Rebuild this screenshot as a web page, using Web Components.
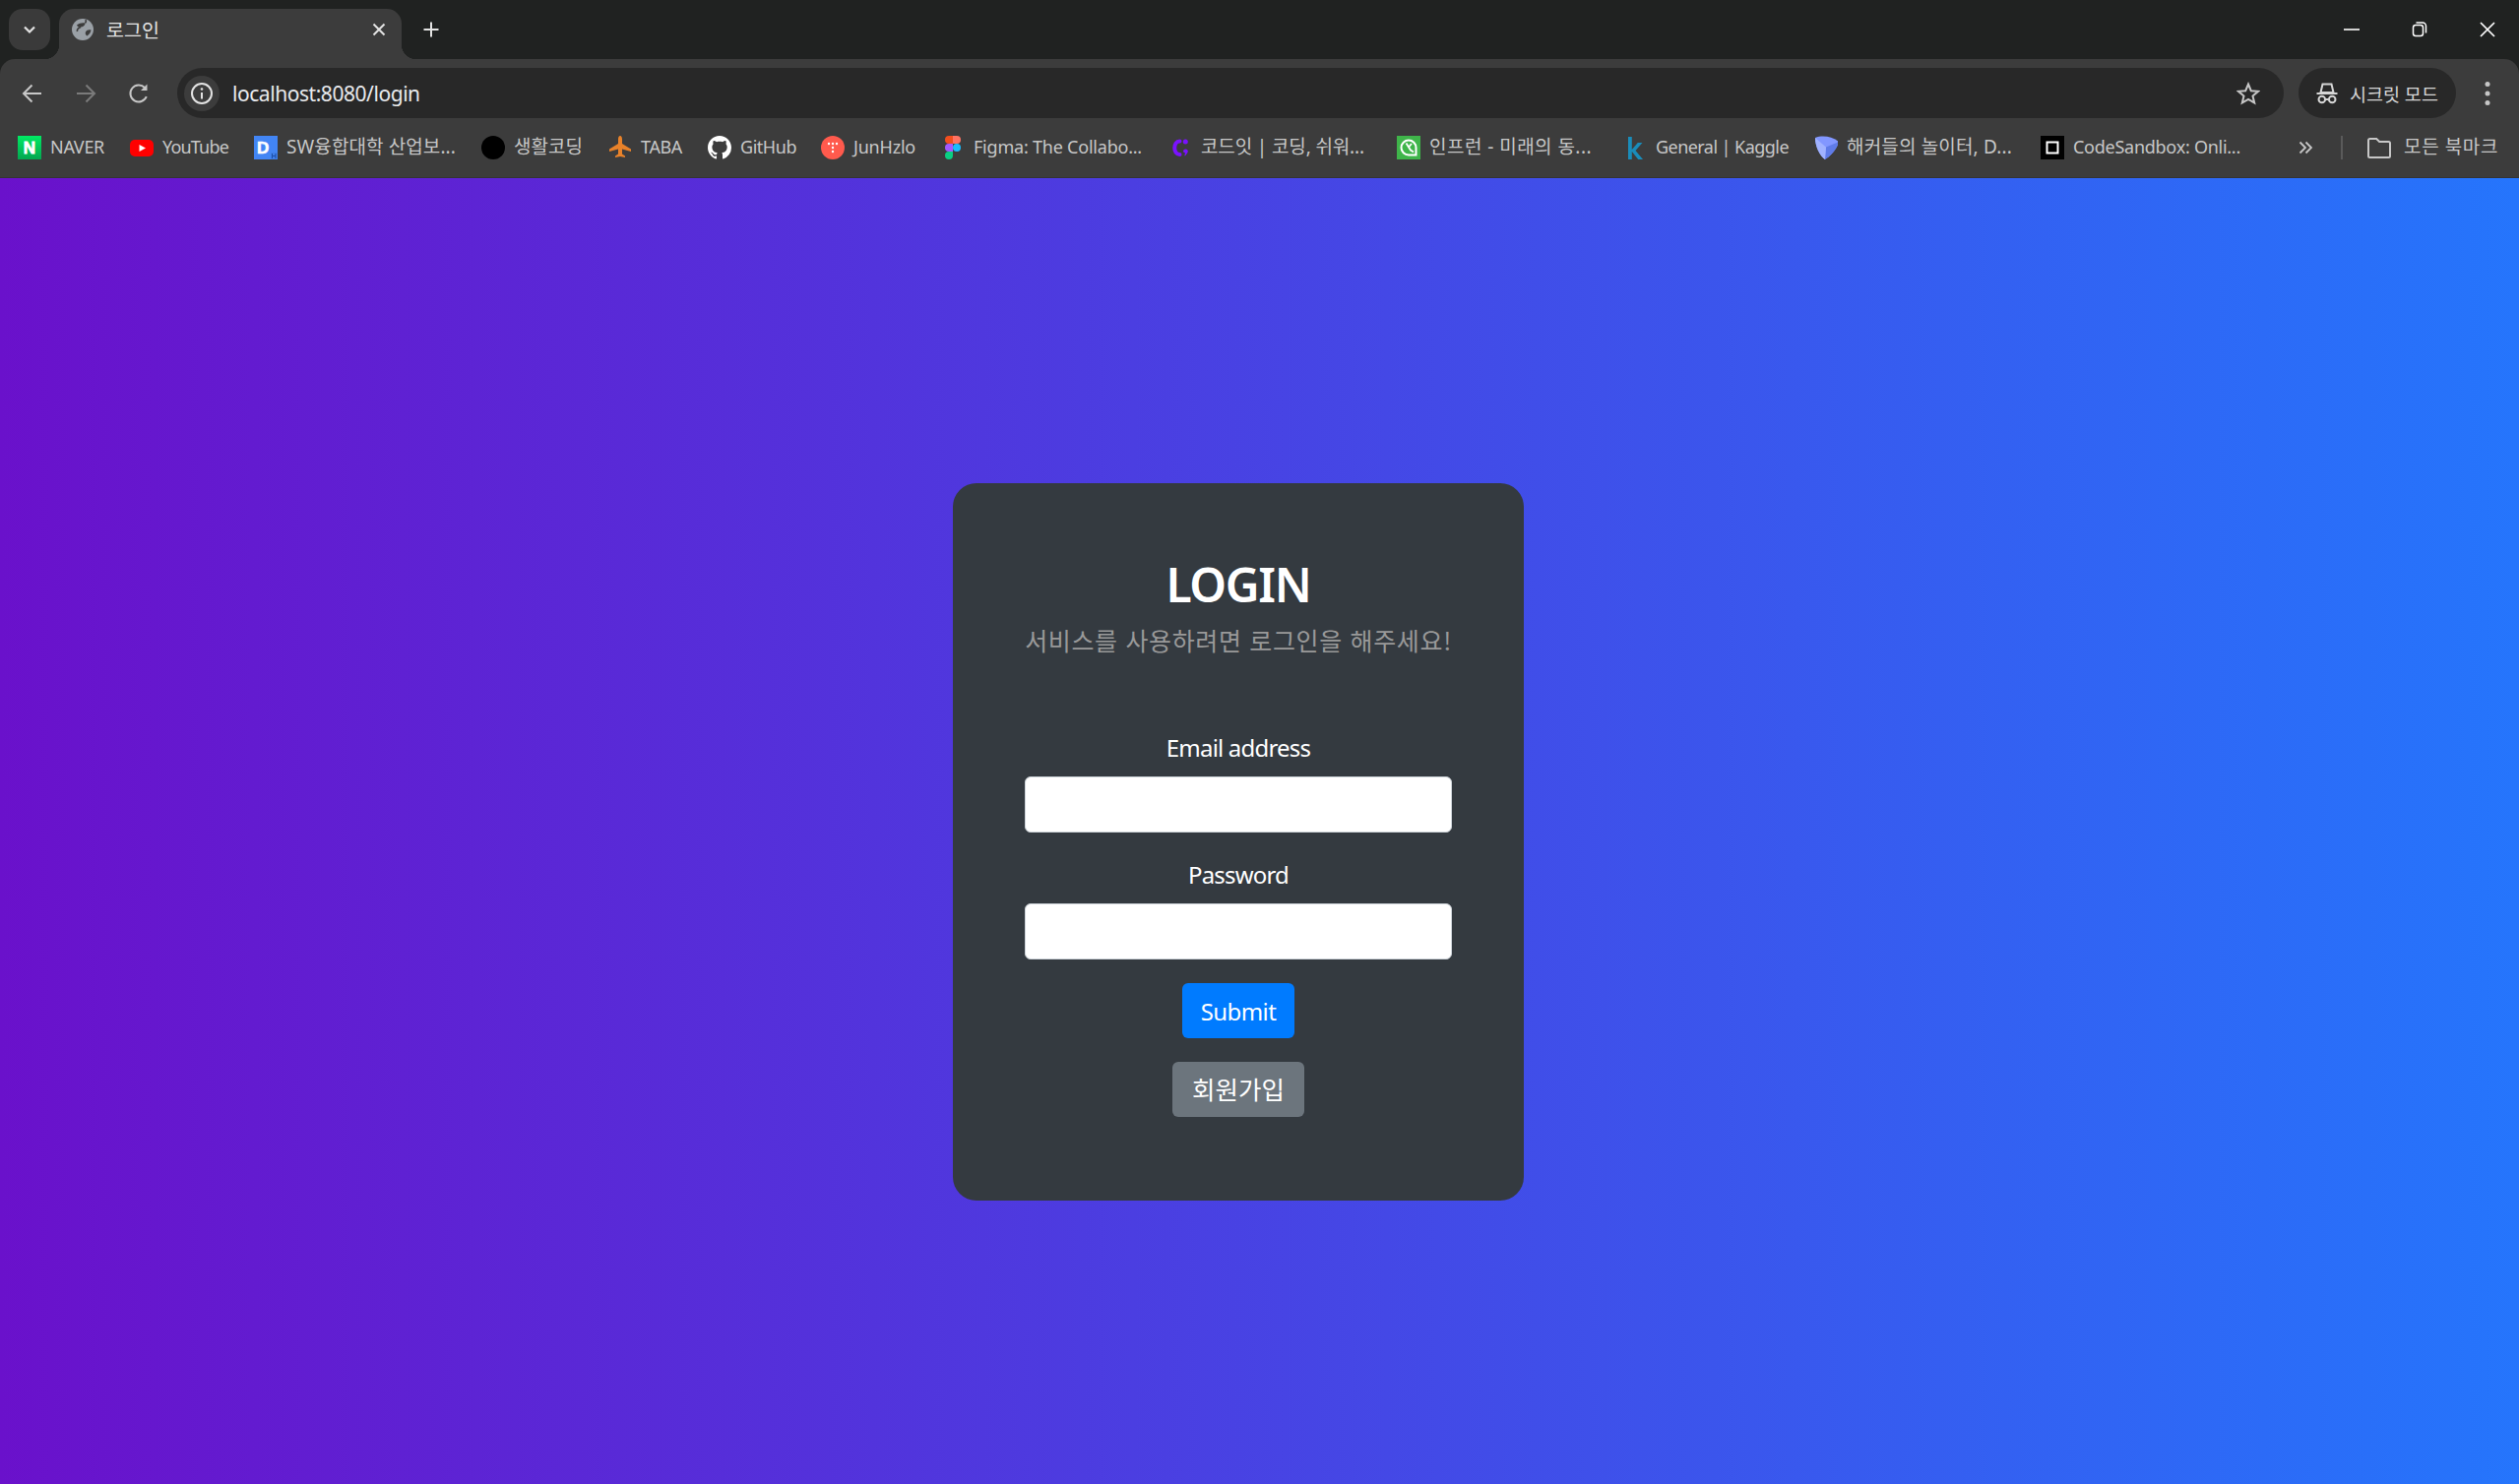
<!DOCTYPE html>
<html lang="ko">
<head>
<meta charset="utf-8">
<title>로그인</title>
<style>
html,body{margin:0;padding:0;height:100%;overflow:hidden}
body{display:flex;flex-direction:column;background:#202221;font-family:"Noto Sans","Noto Sans CJK KR",sans-serif}
</style>
</head>
<body>
<tab-strip></tab-strip>
<nav-toolbar></nav-toolbar>
<bookmark-bar>
  <bm-item label="NAVER" w="55" t="55"><svg viewBox="0 0 24 24"><defs><linearGradient id="n" x1="0" y1="0" x2="0" y2="1"><stop offset="0" stop-color="#00ea63"/><stop offset="1" stop-color="#03a650"/></linearGradient></defs><rect width="24" height="24" fill="url(#n)"/><text x="12" y="18" text-anchor="middle" font-family="Liberation Sans" font-weight="700" font-size="17" fill="#fff" stroke="#fff" stroke-width=".8">N</text></svg></bm-item>
  <bm-item label="YouTube" w="67" t="67"><svg viewBox="0 0 24 24"><rect x="0" y="4" width="24" height="17" rx="5" fill="#f00"/><path d="M9.500 9l6.500 3.500-6.500 3.500z" fill="#fff"/></svg></bm-item>
  <bm-item label="SW융합대학 산업보..." w="172" t="172"><svg viewBox="0 0 24 24"><rect width="24" height="24" fill="#4285f4"/><text x="3" y="18" font-family="Liberation Sans" font-weight="700" font-size="17" fill="#fff" stroke="#fff" stroke-width=".6">D</text><rect x="17" y="17" width="7" height="7" fill="#3f7fe8"/><path d="M18.500 18v5M22 18v5M18.500 20.500h3.500" stroke="#1c4fa8" stroke-width="1" fill="none"/></svg></bm-item>
  <bm-item label="생활코딩" w="70" t="70"><svg viewBox="0 0 24 24"><ellipse cx="12" cy="12" rx="12" ry="12" fill="#000"/></svg></bm-item>
  <bm-item label="TABA" w="42" t="42"><svg viewBox="0 0 24 24"><path d="M12 0c1.300 0 2 1.600 2 3.500V8l9 5.500V16l-9-2.500v5l3 2V22l-5-1-5 1v-1.500l3-2v-5L1 16v-2.500L10 8V3.500C10 1.600 10.700 0 12 0z" fill="#e8822a"/></svg></bm-item>
  <bm-item label="GitHub" w="56" t="57"><svg viewBox="0 0 16 16"><path fill="#fff" d="M8 0C3.580 0 0 3.580 0 8c0 3.540 2.290 6.530 5.470 7.590.4.070.55-.17.55-.38 0-.19-.01-.82-.01-1.490-2.010.37-2.530-.49-2.690-.94-.09-.23-.48-.94-.82-1.130-.28-.15-.68-.52-.01-.53.63-.01 1.080.58 1.230.82.72 1.210 1.870.87 2.330.66.070-.52.28-.87.51-1.070-1.780-.2-3.640-.89-3.640-3.950 0-.87.31-1.590.82-2.150-.08-.2-.36-1.020.08-2.120 0 0 .67-.21 2.200.82.640-.18 1.320-.27 2-.27s1.360.09 2 .27c1.530-1.040 2.200-.82 2.200-.82.440 1.100.160 1.920.080 2.120.51.560.82 1.270.82 2.150 0 3.070-1.870 3.750-3.650 3.950.29.250.54.730.54 1.480 0 1.070-.01 1.930-.01 2.200 0 .210.150.460.550.380A8.010 8.010 0 0 0 16 8c0-4.420-3.580-8-8-8z"/></svg></bm-item>
  <bm-item label="JunHzlo" w="63" t="63"><svg viewBox="0 0 24 24"><circle cx="12" cy="12" r="12" fill="#ff5a4d"/><g fill="#fff"><circle cx="8" cy="8" r="1.200"/><circle cx="12" cy="8" r="1.200"/><circle cx="16" cy="8" r="1.200"/><circle cx="12" cy="12" r="1.200"/><circle cx="12" cy="16" r="1.200"/></g></svg></bm-item>
  <bm-item label="Figma: The Collabo..." w="172" t="171"><svg viewBox="0 0 24 24"><path d="M8 0h4v8H8a4 4 0 0 1 0-8z" fill="#f24e1e"/><path d="M12 0h4a4 4 0 0 1 0 8h-4z" fill="#ff7262"/><path d="M8 8h4v8H8a4 4 0 0 1 0-8z" fill="#a259ff"/><circle cx="16" cy="12" r="4" fill="#1abcfe"/><path d="M8 16h4v4a4 4 0 1 1-4-4z" fill="#0acf83"/></svg></bm-item>
  <bm-item label="코드잇 | 코딩, 쉬워..." w="173" t="166"><svg viewBox="0 0 24 24"><path d="M11.500 5.500C4.500 5.500 4.500 19 11.500 19" fill="none" stroke="#7a12ff" stroke-width="4" stroke-linecap="round"/><circle cx="17.300" cy="6" r="2.500" fill="#7a12ff"/><path d="M15 16a2.400 2.400 0 1 1 4.500 1l-2.500 3.500-.7-.6.800-2.400a2.400 2.400 0 0 1-2.100-1.500z" fill="#7a12ff"/></svg></bm-item>
  <bm-item label="인프런 - 미래의 동..." w="171" t="165"><svg viewBox="0 0 24 24"><rect width="24" height="24" fill="#3fb54a"/><path d="M12 4.500a7.500 7.500 0 1 0 0 15h7.500V12A7.500 7.500 0 0 0 12 4.500z" fill="none" stroke="#fff" stroke-width="2"/><path d="M9.500 7.500L14 14.500l3 2M12 11.500l3-3.500" fill="none" stroke="#fff" stroke-width="1.800"/></svg></bm-item>
  <bm-item label="General | Kaggle" w="135" t="135"><svg viewBox="0 0 24 24"><path d="M5 1h3.800v13l6-7H19.500l-7 8 7.500 9h-4.800l-6.400-8v8H5z" fill="#1a8cba"/></svg></bm-item>
  <bm-item label="해커들의 놀이터, D..." w="171" t="168"><svg viewBox="-1 0 24 24"><path d="M0 2C8-1 18 1 24 6 22 14 15 21 10 24 5 21 0 11 0 2z" fill="#8297ff"/><path d="M11 11.500L24 6C22 14 15 21 10 24z" fill="#5f7be8"/><path d="M0 2L11 11.500 10 24C5 21 0 11 0 2z" fill="#a0b2ff"/></svg></bm-item>
  <bm-item label="CodeSandbox: Onli..." w="170" t="170"><svg viewBox="0 0 24 24"><rect width="24" height="24" fill="#000"/><rect x="6.500" y="6.500" width="11" height="11" fill="none" stroke="#fff" stroke-width="2"/></svg></bm-item>
</bookmark-bar>
<login-page>
  <login-card heading="LOGIN" sub="서비스를 사용하려면 로그인을 해주세요!">
    <form-field label="Email address" type="email"></form-field>
    <form-field label="Password" type="password"></form-field>
    <action-button kind="primary">Submit</action-button>
    <action-button kind="secondary">회원가입</action-button>
  </login-card>
</login-page>
<script>
const FONT='"Noto Sans","Noto Sans CJK KR",sans-serif';
function def(name,html,init){
  customElements.define(name,class extends HTMLElement{
    connectedCallback(){
      if(this.shadowRoot)return;
      const r=this.attachShadow({mode:'open'});
      r.innerHTML=typeof html==='function'?html(this):html;
      if(init)init(this,r);
    }
  });
}
def('tab-strip',`<style>
:host{display:flex;height:60px;flex:none;background:#202221;color:#e3e3e3;font:19.500px ${FONT};padding-left:9px;box-sizing:border-box;align-items:flex-start;padding-top:9px;position:relative;z-index:2}
.search{width:42px;height:42px;border-radius:14px;background:#3a3a3a;display:flex;align-items:center;justify-content:center;margin-right:9px}
.tab{width:348px;height:51px;background:#3c3c3c;border-radius:15px 15px 0 0;display:flex;align-items:center;position:relative;box-sizing:border-box;padding:0 15px 9px 12px}
.tab::before,.tab::after{content:"";position:absolute;bottom:0;width:15px;height:15px}
.tab::before{left:-15px;background:radial-gradient(circle at 0 0,transparent 15px,#3c3c3c 15.500px)}
.tab::after{right:-15px;background:radial-gradient(circle at 100% 0,transparent 15px,#3c3c3c 15.500px)}
.title{flex:1;margin-left:12px;line-height:24px;margin-top:1px}
.plus{margin-left:15px;width:30px;height:42px;display:flex;align-items:center;justify-content:center}
.win{margin-left:auto;margin-right:-2px;display:flex;height:42px;align-items:center;color:#fff}
.win span{display:flex;width:69px;justify-content:center}
svg{display:block}
</style>
<div class="search"><svg width="16" height="16" viewBox="0 0 16 16"><path d="M3 5.500l5 5 5-5" fill="none" stroke="#e3e3e3" stroke-width="2.200"/></svg></div>
<div class="tab"><svg width="24" height="24" viewBox="0 0 24 24"><circle cx="12" cy="12" r="11" fill="#9aa0a6"/><path d="M6 7.500C8.500 5.500 11.500 5 14.500 5.500 14.500 7.500 13 9 10.500 9.500 8.500 9.900 7 9.500 6 7.500zM20.500 12.500C18 12 16 12.500 15 14.500 14.300 16 15 17.500 16.500 18.500 18.500 17 20.200 15 20.500 12.500z" fill="#3c3c3c"/><path d="M10 9.500C7.500 10.500 6 12 6.500 14M14.500 5.500C15.500 4.500 15.500 3 15 2" fill="none" stroke="#3c3c3c" stroke-width="1.600"/></svg><span class="title">로그인</span><svg width="16" height="16" viewBox="0 0 16 16"><path d="M2.500 2.500l11 11M13.500 2.500l-11 11" stroke="#e3e3e3" stroke-width="2"/></svg></div>
<div class="plus"><svg width="18" height="18" viewBox="0 0 18 18"><path d="M9 1.500v15M1.500 9h15" stroke="#e3e3e3" stroke-width="2"/></svg></div>
<div class="win">
<span><svg width="18" height="18" viewBox="0 0 18 18"><path d="M1 9h16" stroke="#fff" stroke-width="1.600"/></svg></span>
<span><svg width="18" height="18" viewBox="0 0 18 18"><rect x="2.500" y="4.500" width="10" height="11" rx="2.500" fill="none" stroke="#fff" stroke-width="1.500"/><path d="M5.500 2h6.500a3.500 3.500 0 0 1 3.500 3.500v7" fill="none" stroke="#fff" stroke-width="1.500"/></svg></span>
<span><svg width="18" height="18" viewBox="0 0 18 18"><path d="M2 2l14 14M16 2L2 16" stroke="#fff" stroke-width="1.700"/></svg></span>
</div>`);
def('nav-toolbar',`<style>
:host{display:flex;flex:none;height:69px;box-sizing:border-box;padding:9px 0 0 6px;background:#3c3c3c;border-radius:15px 15px 0 0;color:#e3e3e3;font:21px ${FONT};align-items:flex-start;position:relative;z-index:1}
.btn{width:54px;height:51px;display:flex;align-items:center;justify-content:center}
.btn.r{width:54px;margin-right:3px}
.omni{flex:1;height:51px;margin-left:9px;background:#282828;border-radius:26px;display:flex;align-items:center;padding:0 24px 0 7px}
.info{width:36px;height:36px;border-radius:50%;background:#3c3c3c;display:flex;align-items:center;justify-content:center;margin-right:13px}
.url{flex:1;color:#e8eaed;font-family:"Noto Sans",sans-serif;letter-spacing:-.45px}
.pill{margin-left:15px;width:160px;height:51px;border-radius:26px;background:#282828;display:flex;align-items:center;box-sizing:border-box;padding-left:17px;font-size:18.500px;color:#d6d6d6;gap:11px}
.menu{width:64px;height:51px;display:flex;align-items:center;justify-content:center}
svg{display:block}
</style>
<div class="btn"><svg width="24" height="24" viewBox="0 0 24 24"><path d="M21 12H3.500M11.500 3.500L3 12l8.500 8.500" fill="none" stroke="#c7c7c7" stroke-width="2"/></svg></div>
<div class="btn"><svg width="24" height="24" viewBox="0 0 24 24"><path d="M3 12h17.500M12.500 3.500L21 12l-8.500 8.500" fill="none" stroke="#7b7b7b" stroke-width="2"/></svg></div>
<div class="btn r"><svg width="24" height="24" viewBox="0 0 24 24"><path d="M19.800 15.200A8.500 8.500 0 1 1 18 6" fill="none" stroke="#c7c7c7" stroke-width="2"/><path d="M20.500 2.500v6.500h-6.500z" fill="#c7c7c7"/></svg></div>
<div class="omni"><div class="info"><svg width="24" height="24" viewBox="0 0 24 24"><circle cx="12" cy="12" r="10" fill="none" stroke="#e3e3e3" stroke-width="2"/><path d="M12 11v6.500" stroke="#e3e3e3" stroke-width="2"/><circle cx="12" cy="7.500" r="1.300" fill="#e3e3e3"/></svg></div><span class="url">localhost:8080/login</span><svg width="24" height="24" viewBox="0 0 24 24"><path d="M12 2.500l2.800 6.700 7.200.6-5.500 4.700 1.700 7L12 17.800 5.800 21.500l1.700-7L2 9.800l7.200-.6z" fill="none" stroke="#c7c7c7" stroke-width="2"/></svg></div>
<div class="pill"><svg width="24" height="24" viewBox="0 0 24 24"><path d="M7.500 2.500h9l2 8.500h-13z" fill="none" stroke="#d6d6d6" stroke-width="2"/><path d="M1.500 12h21" stroke="#d6d6d6" stroke-width="2"/><circle cx="6.800" cy="18" r="3.300" fill="none" stroke="#d6d6d6" stroke-width="2"/><circle cx="17.200" cy="18" r="3.300" fill="none" stroke="#d6d6d6" stroke-width="2"/><path d="M10.200 18h3.600" stroke="#d6d6d6" stroke-width="2"/></svg><span>시크릿 모드</span></div>
<div class="menu"><svg width="8" height="28" viewBox="0 0 8 28"><circle cx="4" cy="4.500" r="2.500" fill="#c7c7c7"/><circle cx="4" cy="14" r="2.500" fill="#c7c7c7"/><circle cx="4" cy="23.500" r="2.500" fill="#c7c7c7"/></svg></div>`);
def('bookmark-bar',`<style>
:host{display:flex;flex:none;height:52px;box-sizing:border-box;padding:9px 0 0 18px;background:#3c3c3c;border-bottom:1px solid #343434;gap:26px;align-items:flex-start;color:#c7c7c7;font:18px ${FONT}}
.more{margin-left:auto;display:flex;align-items:center;height:24px;color:#c7c7c7}
.chev{margin-right:28px}
.sep{width:2px;height:24px;background:#5a5a5a;margin-right:25px}
.all{display:flex;gap:13px;align-items:center;margin-right:21px;line-height:22px;font-size:19px}
.all span{letter-spacing:.6px;margin-bottom:2px}
svg{display:block}
</style>
<slot></slot>
<div class="more"><svg class="chev" width="16" height="16" viewBox="0 0 16 16"><path d="M2.500 2.500L8 8l-5.500 5.500M8.500 2.500L14 8l-5.500 5.500" fill="none" stroke="#c7c7c7" stroke-width="1.800"/></svg><div class="sep"></div><div class="all"><svg width="24" height="24" viewBox="0 0 24 24"><path d="M1 4.500A1.500 1.500 0 0 1 2.500 3h6.700l3 3h9.300A1.500 1.500 0 0 1 23 7.500v13a1.500 1.500 0 0 1-1.500 1.500h-19A1.500 1.500 0 0 1 1 20.500z" fill="none" stroke="#c7c7c7" stroke-width="2"/></svg><span>모든 북마크</span></div></div>`);
def('bm-item',t=>{
  const lab=t.getAttribute('label');
  const fs=/[가-힣]/.test(lab)?19:18;
  return `<style>
:host{display:flex;align-items:center;height:24px;flex:none;gap:9px}
::slotted(svg){width:24px;height:24px;display:block;flex:none}
.l{display:block;width:${t.getAttribute('w')}px;white-space:nowrap;line-height:22px;margin-bottom:2px;font-size:${fs}px}
.m{display:inline-block}
</style><slot></slot><span class="l"><span class="m">${lab}</span></span>`;
},(t,r)=>{
  const m=r.querySelector('.m');
  const d=+t.getAttribute('t')-m.getBoundingClientRect().width;
  m.style.letterSpacing=(d/m.textContent.length).toFixed(3)+'px';
});
def('login-page',`<style>
:host{display:block;flex:1;min-height:0;box-sizing:border-box;padding:310px 0 0 968px;background:linear-gradient(90deg,#6a11cb 0%,#2575fc 100%)}
</style><slot></slot>`);
def('login-card',t=>`<style>
:host{display:flex;flex-direction:column;align-items:center;box-sizing:border-box;width:580px;height:729px;padding:72px 73px;background:#343a40;border-radius:24px;color:#fff;font:24px/36px ${FONT}}
h2{margin:0 0 8px;font-size:48px;line-height:62px;font-weight:600;letter-spacing:-1.300px}
p{margin:0 0 74px;color:#999;white-space:nowrap;font:25px/34px "Noto Sans CJK KR",sans-serif;letter-spacing:.65px}
</style><h2>${t.getAttribute('heading')}</h2><p>${t.getAttribute('sub')}</p><slot></slot>`);
def('form-field',t=>`<style>
:host{display:flex;flex-direction:column;align-items:center;width:100%;margin-bottom:24px}
label{display:block;margin-bottom:10px;line-height:38px;letter-spacing:-.8px}
input{display:block;box-sizing:border-box;width:100%;height:57px;border:1.500px solid #ced4da;border-radius:6px;background:#fff;padding:0;outline:0}
</style><label for="i">${t.getAttribute('label')}</label><input id="i" type="${t.getAttribute('type')}">`);
def('action-button',t=>{
  const p=t.getAttribute('kind')==='primary';
  return `<style>
:host{display:block;margin-bottom:24px}
button{display:block;box-sizing:border-box;height:56px;width:${p?114:134}px;padding:${p?'2px':'0'} 0 0;border:0;border-radius:6px;color:#fff;font:${p?24:25.5}px/36px ${FONT};letter-spacing:${p?'-.6px':'0'};background:${p?'#007bff':'#6c757d'}}
</style><button type="button"><slot></slot></button>`;
});
</script>
</body>
</html>
